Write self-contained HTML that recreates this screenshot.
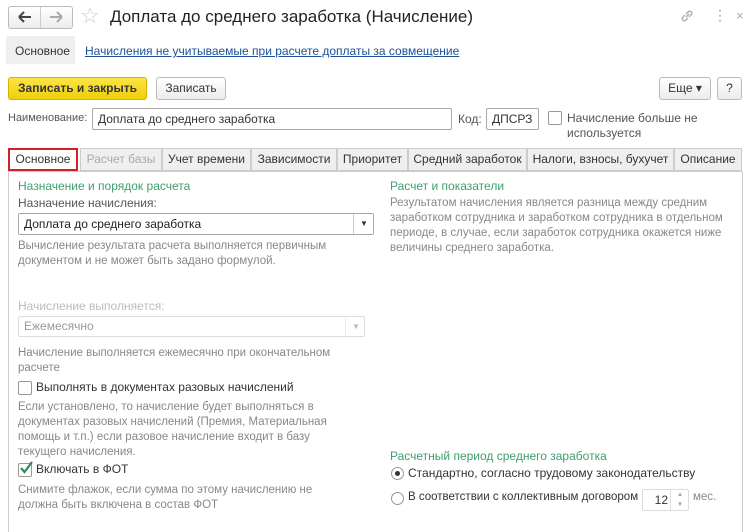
<!DOCTYPE html>
<html><head><meta charset="utf-8"><style>
body{margin:0;width:750px;height:521px;background:#fff;font-family:"Liberation Sans",sans-serif;font-size:12px;color:#333;position:relative;overflow:hidden}
.a{position:absolute;white-space:nowrap}
.btn{position:absolute;border:1px solid #bbb;border-radius:3px;background:linear-gradient(#fff,#ececec);box-sizing:border-box;text-align:center;font-size:12px;color:#333}
.inp{position:absolute;border:1px solid #aaa;border-radius:2px;background:#fff;box-sizing:border-box;padding-left:5px;font-size:12px}
.tab{position:absolute;top:148px;height:23px;box-sizing:border-box;border:1px solid #ccc;background:#efefef;text-align:center;line-height:21px;font-size:12px;color:#333}
.g{color:#888;font-size:11.5px}
.h{color:#3c9f6d}
.cb{position:absolute;width:12px;height:12px;border:1px solid #999;border-radius:2px;background:#fff}
</style></head><body>
<div class="btn" style="left:8px;top:6px;width:65px;height:23px"></div>
<svg class="a" style="left:16px;top:10px" width="18" height="14" viewBox="0 0 18 14"><path d="M3 7H15M3 7L8 2M3 7L8 12" stroke="#444" stroke-width="2" fill="none"/></svg>
<div class="a" style="left:40px;top:7px;height:21px;border-left:1px solid #ccc"></div>
<svg class="a" style="left:47px;top:10px" width="18" height="14" viewBox="0 0 18 14"><path d="M15 7H3M15 7L10 2M15 7L10 12" stroke="#aaa" stroke-width="2" fill="none"/></svg>
<div class="a" style="left:80px;top:3px;font-size:22px;color:#ccc">☆</div>
<div class="a" style="left:110px;top:7px;font-size:17px;color:#222">Доплата до среднего заработка (Начисление)</div>
<svg class="a" style="left:679px;top:8px" width="16" height="16" viewBox="0 0 16 16"><path d="M7 9L10 6M6 7L3.5 9.5a2.2 2.2 0 0 0 3 3L9 10M10 9l2.5-2.5a2.2 2.2 0 0 0-3-3L7 6" stroke="#aaa" stroke-width="1.3" fill="none"/></svg>
<div class="a" style="left:713px;top:7px;font-size:14px;color:#999">⋮</div>
<div class="a" style="left:736px;top:8px;font-size:13px;color:#aaa">×</div>
<div class="a" style="left:6px;top:36px;width:69px;height:28px;background:#efefef"></div>
<div class="a" style="left:15px;top:44px">Основное</div>
<div class="a" style="left:85px;top:44px;color:#1b4f9a;text-decoration:underline">Начисления не учитываемые при расчете доплаты за совмещение</div>
<div class="btn" style="left:8px;top:77px;width:139px;height:23px;background:linear-gradient(#fbe544,#efcf0a);border-color:#d4b400;line-height:21px;font-weight:bold;color:#333">Записать и закрыть</div>
<div class="btn" style="left:156px;top:77px;width:70px;height:23px;line-height:21px">Записать</div>
<div class="btn" style="left:659px;top:77px;width:52px;height:23px;line-height:21px">Еще ▾</div>
<div class="btn" style="left:717px;top:77px;width:25px;height:23px;line-height:21px">?</div>
<div class="a" style="left:8px;top:112px;color:#555;font-size:11px">Наименование:</div>
<div class="inp" style="left:92px;top:108px;width:360px;height:22px;line-height:20px">Доплата до среднего заработка</div>
<div class="a" style="left:458px;top:112px;color:#555">Код:</div>
<div class="inp" style="left:486px;top:108px;width:53px;height:22px;line-height:20px">ДПСРЗ</div>
<div class="cb" style="left:548px;top:111px"></div>
<div class="a" style="left:567px;top:111px;color:#555;line-height:15px">Начисление больше не<br>используется</div>
<div class="tab" style="left:8px;width:70px;background:#fff;border:2px solid #d2202a;line-height:19px">Основное</div>
<div class="tab" style="left:80px;width:82px;color:#aaa">Расчет базы</div>
<div class="tab" style="left:162px;width:89px">Учет времени</div>
<div class="tab" style="left:251px;width:86px">Зависимости</div>
<div class="tab" style="left:337px;width:71px">Приоритет</div>
<div class="tab" style="left:408px;width:119px">Средний заработок</div>
<div class="tab" style="left:527px;width:147px">Налоги, взносы, бухучет</div>
<div class="tab" style="left:674px;width:68px">Описание</div>
<div class="a" style="left:8px;top:171px;width:733px;height:360px;border:1px solid #ccc;border-bottom:none"></div>
<div class="a h" style="left:18px;top:179px">Назначение и порядок расчета</div>
<div class="a" style="left:18px;top:196px;color:#555">Назначение начисления:</div>
<div class="inp" style="left:18px;top:213px;width:356px;height:22px;line-height:20px;color:#222">Доплата до среднего заработка</div>
<div class="a" style="left:353px;top:214px;height:20px;border-left:1px solid #ccc;width:20px;text-align:center;font-size:8px;line-height:20px">▼</div>
<div class="a g" style="left:18px;top:239px;line-height:15px">Вычисление результата расчета выполняется первичным<br>документом и не может быть задано формулой.</div>
<div class="a" style="left:18px;top:299px;color:#bbb">Начисление выполняется:</div>
<div class="inp" style="left:18px;top:316px;width:347px;height:21px;line-height:19px;color:#999;border-color:#ddd">Ежемесячно</div>
<div class="a" style="left:345px;top:317px;height:19px;border-left:1px solid #eee;width:20px;text-align:center;font-size:8px;line-height:19px;color:#bbb">▼</div>
<div class="a g" style="left:18px;top:346px;line-height:15px">Начисление выполняется ежемесячно при окончательном<br>расчете</div>
<div class="cb" style="left:18px;top:381px"></div>
<div class="a" style="left:36px;top:380px">Выполнять в документах разовых начислений</div>
<div class="a g" style="left:18px;top:400px;line-height:15px">Если установлено, то начисление будет выполняться в<br>документах разовых начислений (Премия, Материальная<br>помощь и т.п.) если разовое начисление входит в базу<br>текущего начисления.</div>
<div class="cb" style="left:18px;top:463px"></div>
<svg class="a" style="left:18px;top:460px" width="16" height="16" viewBox="0 0 16 16"><path d="M3 8L6.5 12L14 2" stroke="#2e8b57" stroke-width="2.2" fill="none"/></svg>
<div class="a" style="left:36px;top:462px">Включать в ФОТ</div>
<div class="a g" style="left:18px;top:483px;line-height:15px">Снимите флажок, если сумма по этому начислению не<br>должна быть включена в состав ФОТ</div>
<div class="a h" style="left:390px;top:179px">Расчет и показатели</div>
<div class="a g" style="left:390px;top:196px;line-height:15px">Результатом начисления является разница между средним<br>заработком сотрудника и заработком сотрудника в отдельном<br>периоде, в случае, если заработок сотрудника окажется ниже<br>величины среднего заработка.</div>
<div class="a h" style="left:390px;top:449px">Расчетный период среднего заработка</div>
<div class="a" style="left:391px;top:467px;width:11px;height:11px;border:1px solid #999;border-radius:50%"></div>
<div class="a" style="left:395px;top:471px;width:5px;height:5px;background:#333;border-radius:50%"></div>
<div class="a" style="left:408px;top:466px">Стандартно, согласно трудовому законодательству</div>
<div class="a" style="left:391px;top:492px;width:11px;height:11px;border:1px solid #999;border-radius:50%"></div>
<div class="a" style="left:408px;top:491px;font-size:11.5px">В соответствии с коллективным договором</div>
<div class="inp" style="left:642px;top:489px;width:47px;height:22px;border-color:#ddd;text-align:right;padding-right:20px;line-height:20px">12</div>
<div class="a" style="left:670px;top:490px;height:20px;border-left:1px solid #ddd;width:18px;font-size:7px;color:#999;text-align:center;line-height:10px">▴<br>▾</div>
<div class="a g" style="left:693px;top:491px">мес.</div>
</body></html>
